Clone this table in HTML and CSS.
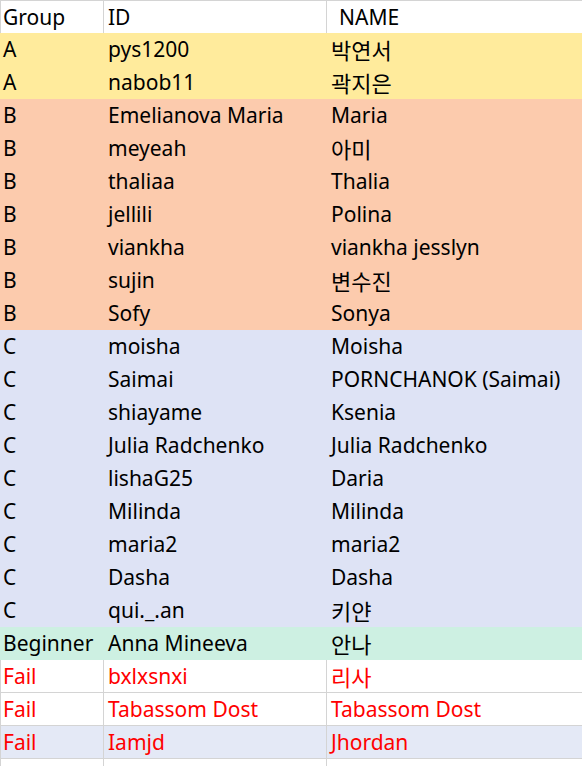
FILE: index.html
```html
<!DOCTYPE html>
<html lang="ko">
<head>
<meta charset="utf-8">
<title>Group list</title>
<link rel="stylesheet" href="styles.css">
</head>
<body>
<div class="sheet">
  <div class="row grid head"><div class="c">Group</div><div class="c">ID</div><div class="c name-h">NAME</div></div>
  <div class="row a"><div class="c">A</div><div class="c">pys1200</div><div class="c ko">박연서</div></div>
  <div class="row a"><div class="c">A</div><div class="c">nabob11</div><div class="c ko">곽지은</div></div>
  <div class="row b"><div class="c">B</div><div class="c">Emelianova Maria</div><div class="c">Maria</div></div>
  <div class="row b"><div class="c">B</div><div class="c">meyeah</div><div class="c ko">아미</div></div>
  <div class="row b"><div class="c">B</div><div class="c">thaliaa</div><div class="c">Thalia</div></div>
  <div class="row b"><div class="c">B</div><div class="c">jellili</div><div class="c">Polina</div></div>
  <div class="row b"><div class="c">B</div><div class="c">viankha</div><div class="c">viankha jesslyn</div></div>
  <div class="row b"><div class="c">B</div><div class="c">sujin</div><div class="c ko">변수진</div></div>
  <div class="row b"><div class="c">B</div><div class="c">Sofy</div><div class="c">Sonya</div></div>
  <div class="row cc"><div class="c">C</div><div class="c">moisha</div><div class="c">Moisha</div></div>
  <div class="row cc"><div class="c">C</div><div class="c">Saimai</div><div class="c">PORNCHANOK (Saimai)</div></div>
  <div class="row cc"><div class="c">C</div><div class="c">shiayame</div><div class="c">Ksenia</div></div>
  <div class="row cc"><div class="c">C</div><div class="c">Julia Radchenko</div><div class="c">Julia Radchenko</div></div>
  <div class="row cc"><div class="c">C</div><div class="c">lishaG25</div><div class="c">Daria</div></div>
  <div class="row cc"><div class="c">C</div><div class="c">Milinda</div><div class="c">Milinda</div></div>
  <div class="row cc"><div class="c">C</div><div class="c">maria2</div><div class="c">maria2</div></div>
  <div class="row cc"><div class="c">C</div><div class="c">Dasha</div><div class="c">Dasha</div></div>
  <div class="row cc"><div class="c">C</div><div class="c">qui._.an</div><div class="c ko">키얀</div></div>
  <div class="row beg"><div class="c">Beginner</div><div class="c">Anna Mineeva</div><div class="c ko">안나</div></div>
  <div class="row grid fail"><div class="c">Fail</div><div class="c">bxlxsnxi</div><div class="c ko">리사</div></div>
  <div class="row grid fail"><div class="c">Fail</div><div class="c">Tabassom Dost</div><div class="c">Tabassom Dost</div></div>
  <div class="row grid fail alt"><div class="c">Fail</div><div class="c">Iamjd</div><div class="c">Jhordan</div></div>
  <div class="row grid"><div class="c"></div><div class="c"></div><div class="c"></div></div>
</div>
</body>
</html>
```
FILE: styles.css
```css
html, body {
  margin: 0;
  padding: 0;
  background: #ffffff;
}
.sheet {
  width: 582px;
  font-family: "Noto Sans", "Noto Sans CJK KR", sans-serif;
  font-size: 21px;
  color: #000000;
}
.row {
  display: grid;
  grid-template-columns: 104px 223px 1fr;
  height: 33px;
  box-sizing: border-box;
}
.c {
  padding-left: 3px;
  line-height: 33px;
  white-space: nowrap;
  overflow: hidden;
  box-sizing: border-box;
}
.c + .c {
  padding-left: 4px;
}
.ko {
  font-family: "Noto Sans CJK KR", sans-serif;
  font-size: 22px;
}
.grid .c {
  border-right: 1px solid #d4d4d4;
  line-height: 32px;
}
.grid .c:first-child {
  border-left: 1px solid #d4d4d4;
  padding-left: 2px;
}
.grid .c:last-child {
  border-right: none;
}
.grid {
  border-bottom: 1px solid #d4d4d4;
}
.head {
  border-top: 1px solid #d4d4d4;
  border-bottom: none;
}
.head .c {
  line-height: 32px;
}
.head .name-h {
  padding-left: 12px;
}
.a { background: #ffeb9c; }
.b { background: #fccbad; }
.cc { background: #dee3f5; }
.beg { background: #cdf0e2; }
.fail { color: #ff0000; }
.alt { background: #e4e9f6; }
```
